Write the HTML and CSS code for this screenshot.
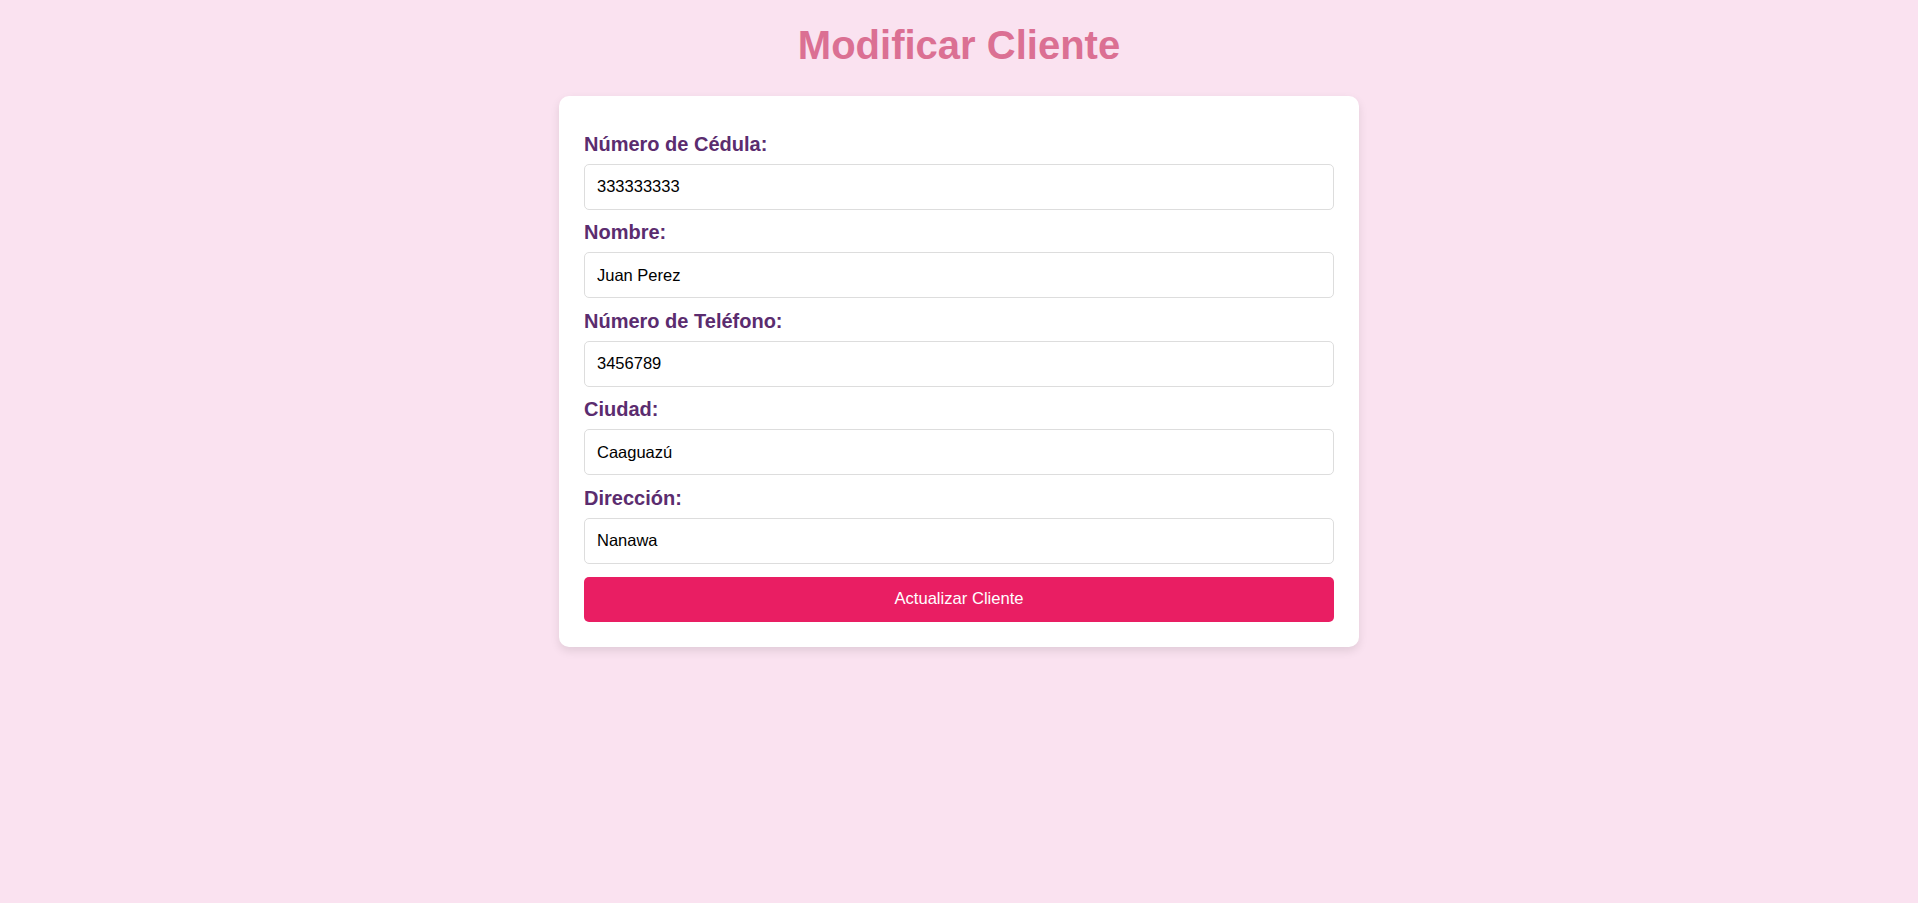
FILE: index.html
```html
<!DOCTYPE html>
<html lang="es">
<head>
<meta charset="utf-8">
<title>Modificar Cliente</title>
<link rel="stylesheet" href="styles.css">
</head>
<body>
<h1 class="title">Modificar Cliente</h1>
<form class="card">
  <label class="label" for="cedula">Número de Cédula:</label>
  <input class="input" id="cedula" type="text" value="333333333">
  <label class="label" for="nombre">Nombre:</label>
  <input class="input" id="nombre" type="text" value="Juan Perez">
  <label class="label" for="telefono">Número de Teléfono:</label>
  <input class="input" id="telefono" type="text" value="3456789">
  <label class="label" for="ciudad">Ciudad:</label>
  <input class="input" id="ciudad" type="text" value="Caaguazú">
  <label class="label" for="direccion">Dirección:</label>
  <input class="input" id="direccion" type="text" value="Nanawa">
  <button class="btn" type="submit">Actualizar Cliente</button>
</form>
</body>
</html>
```
FILE: styles.css
```css
html, body {
  margin: 0;
  padding: 0;
}
body {
  background: #fae2f0;
  font-family: "Liberation Sans", Arial, sans-serif;
  min-height: 903px;
}
.title {
  margin: 22px 0 28px;
  text-align: center;
  font-size: 40px;
  line-height: 46px;
  font-weight: bold;
  color: #db7093;
}
.card {
  box-sizing: border-box;
  width: 800px;
  margin: 0 auto;
  padding: 25px;
  background: #ffffff;
  border-radius: 10px;
  box-shadow: 0 4px 10px rgba(0, 0, 0, 0.1);
  display: flex;
  flex-direction: column;
}
.label {
  display: block;
  margin: 11.5px 0 8px;
  font-size: 20px;
  line-height: 23px;
  font-weight: bold;
  color: #5b2c6f;
}
.input {
  box-sizing: border-box;
  width: 100%;
  height: 46px;
  margin: 0;
  padding: 0 12px;
  border: 1px solid #dddddd;
  border-radius: 5px;
  font-family: "Liberation Sans", Arial, sans-serif;
  font-size: 16.5px;
  color: #000000;
  background: #ffffff;
}
.btn {
  box-sizing: border-box;
  width: 100%;
  height: 45px;
  margin-top: 13px;
  border: none;
  border-radius: 5px;
  background: #e91e63;
  color: #ffffff;
  font-family: "Liberation Sans", Arial, sans-serif;
  font-size: 16.6px;
  cursor: pointer;
}
```
